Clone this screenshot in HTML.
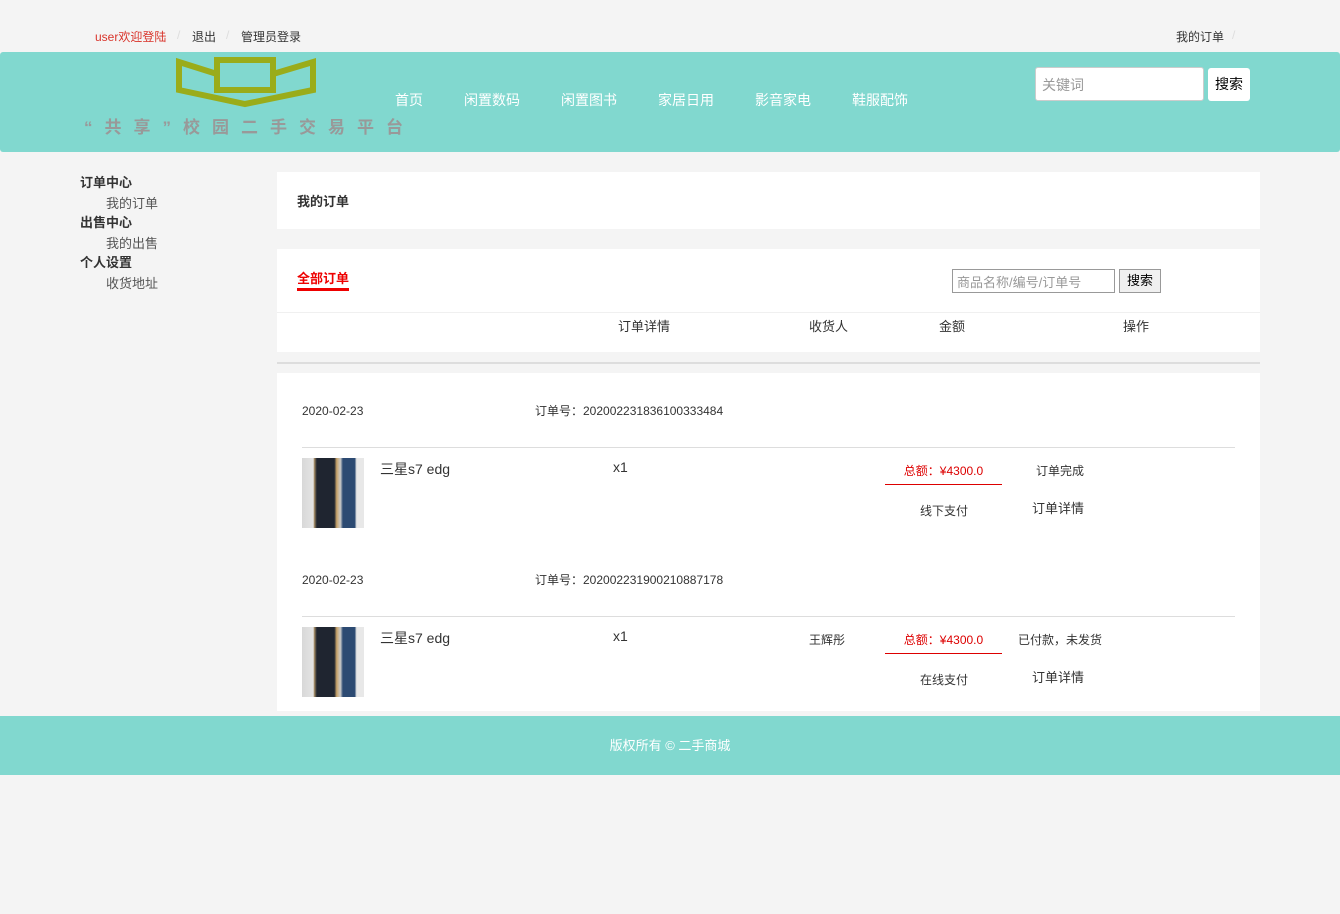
<!DOCTYPE html>
<html><head><meta charset="utf-8"><style>
*{margin:0;padding:0;box-sizing:border-box}
body{width:1340px;height:914px;background:#f4f4f4;font-family:"Liberation Sans","Noto Sans CJK SC",sans-serif;font-size:12px;color:#333;position:relative;overflow:hidden}
.a{position:absolute;white-space:nowrap}
.sep{color:#ddd}
.nav{color:#fff;font-size:14px}
.white{background:#fff;position:absolute}
.thumb{position:absolute;width:62px;height:70px;background:linear-gradient(90deg,#d8d8d8 0,#e4e4e4 18%,#a08860 20%,#1f2530 24%,#1f2530 52%,#c9a46a 56%,#c9c9c9 62%,#2c4a72 66%,#2c4a72 85%,#e8e8e8 88%)}
</style></head><body>
<div class="a" style="left:95px;top:28px;color:#d9342b">user欢迎登陆</div>
<div class="a sep" style="left:177px;top:28px">/</div>
<div class="a" style="left:192px;top:28px">退出</div>
<div class="a sep" style="left:226px;top:28px">/</div>
<div class="a" style="left:241px;top:28px">管理员登录</div>
<div class="a" style="left:1176px;top:28px">我的订单</div>
<div class="a sep" style="left:1232px;top:28px">/</div>

<div class="a" style="left:0;top:52px;width:1340px;height:100px;background:#81d8cf;border-radius:3px"></div>
<svg class="a" style="left:170px;top:54px" width="152" height="56">
<g fill="none" stroke="#9aac1a" stroke-width="6">
<rect x="47" y="6" width="56" height="30"/>
<polyline points="47,20 9,8 9,36 75,50 143,36 143,8 103,20"/>
</g></svg>
<div class="a" style="left:84px;top:113px;font-size:17px;font-weight:bold;color:#999;letter-spacing:12px">“共享”校园二手交易平台</div>
<div class="a nav" style="left:395px;top:90px">首页</div>
<div class="a nav" style="left:464px;top:90px">闲置数码</div>
<div class="a nav" style="left:561px;top:90px">闲置图书</div>
<div class="a nav" style="left:658px;top:90px">家居日用</div>
<div class="a nav" style="left:755px;top:90px">影音家电</div>
<div class="a nav" style="left:852px;top:90px">鞋服配饰</div>
<div class="a" style="left:1035px;top:67px;width:169px;height:34px;background:#fff;border:1px solid #ccc;border-radius:3px;padding:7px 6px;color:#999;font-size:14px">关键词</div>
<div class="a" style="left:1208px;top:68px;width:42px;height:33px;background:#fff;border-radius:3px;font-size:14px;color:#000;text-align:center;line-height:33px">搜索</div>

<div class="a" style="left:80px;top:172px;font-size:13px;font-weight:bold">订单中心</div>
<div class="a" style="left:106px;top:193px;font-size:13px;color:#555">我的订单</div>
<div class="a" style="left:80px;top:212px;font-size:13px;font-weight:bold">出售中心</div>
<div class="a" style="left:106px;top:233px;font-size:13px;color:#555">我的出售</div>
<div class="a" style="left:80px;top:252px;font-size:13px;font-weight:bold">个人设置</div>
<div class="a" style="left:106px;top:273px;font-size:13px;color:#555">收货地址</div>

<div class="white" style="left:277px;top:172px;width:983px;height:57px"></div>
<div class="a" style="left:297px;top:191px;font-size:13px;font-weight:bold">我的订单</div>

<div class="white" style="left:277px;top:249px;width:983px;height:103px"></div>
<div class="a" style="left:297px;top:268px;font-size:13px;font-weight:bold;color:#e00;border-bottom:3px solid #e00;padding-bottom:1px">全部订单</div>
<div class="a" style="left:952px;top:269px;width:163px;height:24px;border:1px solid #999;padding:2px 4px;color:#999;font-size:13px">商品名称/编号/订单号</div>
<div class="a" style="left:1119px;top:269px;width:42px;height:24px;border:1px solid #999;background:#f0f0f0;text-align:center;line-height:22px;font-size:13px;color:#000">搜索</div>
<div class="a" style="left:277px;top:312px;width:983px;border-top:1px solid #f0f0f0"></div>
<div class="a" style="left:618px;top:316px;font-size:13px">订单详情</div>
<div class="a" style="left:809px;top:316px;font-size:13px">收货人</div>
<div class="a" style="left:939px;top:316px;font-size:13px">金额</div>
<div class="a" style="left:1123px;top:316px;font-size:13px">操作</div>
<div class="a" style="left:277px;top:362px;width:983px;border-top:2px solid #ddd"></div>

<div class="white" style="left:277px;top:373px;width:983px;height:338px"></div>
<div class="a" style="left:302px;top:404px">2020-02-23</div>
<div class="a" style="left:535px;top:402px">订单号：202002231836100333484</div>
<div class="a" style="left:302px;top:447px;width:933px;border-top:1px solid #ddd"></div>
<div class="thumb" style="left:302px;top:458px"></div>
<div class="a" style="left:380px;top:459px;font-size:14px">三星s7 edg</div>
<div class="a" style="left:613px;top:459px;font-size:14px">x1</div>
<div class="a" style="left:885px;top:462px;width:117px;text-align:center;color:#d00;border-bottom:1px solid #d00;padding-bottom:5px">总额：¥4300.0</div>
<div class="a" style="left:1036px;top:462px">订单完成</div>
<div class="a" style="left:920px;top:502px">线下支付</div>
<div class="a" style="left:1032px;top:498px;font-size:13px">订单详情</div>

<div class="a" style="left:302px;top:573px">2020-02-23</div>
<div class="a" style="left:535px;top:571px">订单号：202002231900210887178</div>
<div class="a" style="left:302px;top:616px;width:933px;border-top:1px solid #ddd"></div>
<div class="thumb" style="left:302px;top:627px"></div>
<div class="a" style="left:380px;top:628px;font-size:14px">三星s7 edg</div>
<div class="a" style="left:613px;top:628px;font-size:14px">x1</div>
<div class="a" style="left:809px;top:631px">王辉彤</div>
<div class="a" style="left:885px;top:631px;width:117px;text-align:center;color:#d00;border-bottom:1px solid #d00;padding-bottom:5px">总额：¥4300.0</div>
<div class="a" style="left:1018px;top:631px">已付款，未发货</div>
<div class="a" style="left:920px;top:671px">在线支付</div>
<div class="a" style="left:1032px;top:667px;font-size:13px">订单详情</div>

<div class="a" style="left:0;top:716px;width:1340px;height:59px;background:#81d8cf;color:#fff;text-align:center;line-height:59px;font-size:13px">版权所有 © 二手商城</div>
</body></html>
